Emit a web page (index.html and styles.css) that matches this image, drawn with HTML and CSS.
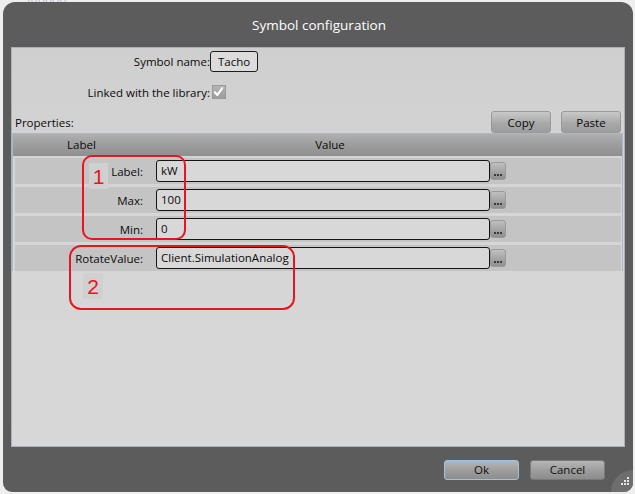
FILE: index.html
```html
<!DOCTYPE html>
<html>
<head>
<meta charset="utf-8">
<link rel="stylesheet" href="styles.css">
</head>
<body>
<div class="backdrop">Ribbon</div>
<div class="window">
  <div class="titlebar">Symbol configuration</div>
  <div class="panel">
    <div class="form-row first">
      <div class="form-label">Symbol name:</div>
      <div class="namebox">Tacho</div>
    </div>
    <div class="form-row second">
      <div class="form-label">Linked with the library:</div>
      <div class="checkbox">
        <svg width="14" height="14" viewBox="0 0 14 14"><path d="M3 7.2 L5.8 10.2 L11 2.8" fill="none" stroke="#fff" stroke-width="2.2" stroke-linejoin="round" stroke-linecap="round"/></svg>
      </div>
    </div>
    <div class="props-row">
      <div class="props-label">Properties:</div>
      <div class="props-actions">
        <div class="btn">Copy</div>
        <div class="btn">Paste</div>
      </div>
    </div>
    <div class="grid">
      <div class="grid-head">
        <div class="head-label">Label</div>
        <div class="head-value">Value</div>
      </div>
      <div class="grid-row">
        <div class="cell-label">Label:</div>
        <div class="textbox">kW</div>
        <div class="ellipsis"><i></i><i></i><i></i></div>
      </div>
      <div class="grid-row">
        <div class="cell-label">Max:</div>
        <div class="textbox">100</div>
        <div class="ellipsis"><i></i><i></i><i></i></div>
      </div>
      <div class="grid-row">
        <div class="cell-label">Min:</div>
        <div class="textbox">0</div>
        <div class="ellipsis"><i></i><i></i><i></i></div>
      </div>
      <div class="grid-row">
        <div class="cell-label">RotateValue:</div>
        <div class="textbox">Client.SimulationAnalog</div>
        <div class="ellipsis"><i></i><i></i><i></i></div>
      </div>
    </div>
    <div class="annot annot-1"></div>
    <div class="annot-num num-1">1</div>
    <div class="annot annot-2"></div>
    <div class="annot-num num-2">2</div>
  </div>
  <div class="footer">
    <div class="dbtn focused">Ok</div>
    <div class="dbtn">Cancel</div>
    <div class="grip">
      <svg width="20" height="20" viewBox="0 0 20 20">
        <rect x="14" y="5" width="2" height="2" fill="#e6e6e6"/>
        <rect x="11" y="8" width="2" height="2" fill="#e6e6e6"/>
        <rect x="14" y="8" width="2" height="2" fill="#e6e6e6"/>
        <rect x="8" y="11" width="2" height="2" fill="#e6e6e6"/>
        <rect x="11" y="11" width="2" height="2" fill="#e6e6e6"/>
        <rect x="14" y="11" width="2" height="2" fill="#e6e6e6"/>
      </svg>
    </div>
  </div>
</div>
</body>
</html>
```
FILE: styles.css
```css
* { box-sizing: border-box; }
html, body { margin: 0; padding: 0; }
body {
  width: 635px;
  height: 494px;
  overflow: hidden;
  background: #eeeeee;
  font-family: "Open Sans", "Noto Sans", sans-serif;
  font-size: 11.5px;
  color: #0a0a0a;
  position: relative;
}
.backdrop {
  position: absolute;
  left: 27px;
  top: -9px;
  color: #b9c0cc;
  font-size: 12px;
}
.window {
  position: relative;
  margin: 2px 0 0 3px;
  width: 630px;
  height: 490px;
  background: #5c5c5c;
  border-radius: 12px 12px 9px 9px;
  display: flex;
  flex-direction: column;
}
.titlebar {
  height: 45px;
  line-height: 46px;
  text-align: center;
  color: #ffffff;
  font-size: 13.5px;
  padding-left: 2px;
}
.panel {
  position: relative;
  margin-left: 8px;
  width: 614px;
  height: 400px;
  border: 1px solid #a7b1bd;
  background: linear-gradient(#cfcfcf, #d6d6d6 40%, #d7d7d7);
  padding-top: 2px;
}
.form-row {
  display: flex;
  align-items: center;
  height: 22px;
}
.form-row.second { margin-top: 9px; }
.form-label {
  width: 198px;
  text-align: right;
}
.namebox {
  height: 21px;
  line-height: 19px;
  padding: 0 7px;
  border: 1px solid #1e1e1e;
  border-radius: 3px;
  background: #dcdcdc;
}
.checkbox {
  margin-left: 2px;
  width: 14px;
  height: 14px;
  background: linear-gradient(#b4b4b4, #9c9c9c);
  border: 1px solid #9a9a9a;
  display: flex;
}
.checkbox svg { margin: -1px 0 0 -1px; }
.props-row {
  display: flex;
  align-items: center;
  justify-content: space-between;
  height: 22px;
  margin-top: 8px;
  padding-left: 3px;
}
.props-actions {
  display: flex;
  gap: 10px;
  padding-right: 3px;
}
.btn {
  width: 60px;
  height: 22px;
  line-height: 21px;
  text-align: center;
  border: 1px solid #9a9a9a;
  border-radius: 3px;
  background: linear-gradient(#c9c9c9, #a9a9a9 55%, #9d9d9d);
}
.grid {
  margin-right: 1px;
  border: 1px solid #aab8c8;
  border-bottom: none;
}
.grid-head {
  display: flex;
  height: 22px;
  line-height: 21px;
  background: linear-gradient(#b0b0b0, #a0a0a0 40%, #8f8f8f);
}
.head-label {
  width: 135px;
  text-align: center;
  padding-left: 2px;
}
.head-value {
  width: 364px;
  text-align: center;
}
.grid-row {
  display: flex;
  align-items: center;
  height: 26px;
  margin: 3px 1px 0 2px;
  background: #c4c4c4;
}
.grid-head + .grid-row { margin-top: 2px; }
.cell-label {
  width: 133px;
  text-align: right;
  padding-right: 5px;
}
.textbox {
  margin-left: 8px;
  width: 334px;
  height: 22px;
  line-height: 20px;
  padding-left: 4px;
  border: 1px solid #141414;
  border-radius: 3px;
  background: #d8d8d8;
}
.ellipsis {
  width: 16px;
  height: 18px;
  border: 1px solid #9a9a9a;
  border-radius: 3px;
  background: linear-gradient(#c0c0c0, #a4a4a4 55%, #8f8f8f);
  display: flex;
  justify-content: center;
  align-items: flex-end;
  gap: 1px;
  padding-bottom: 3px;
}
.ellipsis i {
  display: block;
  width: 2px;
  height: 2px;
  background: #3a3a3a;
}
.annot {
  position: absolute;
  border: 2px solid #e8141e;
}
.annot-1 {
  left: 70px;
  top: 107px;
  width: 104px;
  height: 85px;
  border-radius: 10px;
}
.annot-2 {
  left: 57px;
  top: 197px;
  width: 226px;
  height: 65px;
  border-radius: 12px;
}
.annot-num {
  position: absolute;
  background: #d0d0d0;
  color: #e8141e;
  font-family: "Liberation Sans", Arial, sans-serif;
  font-size: 21px;
  text-align: center;
}
.num-1 {
  left: 77px;
  top: 115px;
  width: 19px;
  height: 26px;
  line-height: 28px;
}
.num-2 {
  left: 71px;
  top: 225px;
  width: 20px;
  height: 26px;
  line-height: 28px;
}
.footer {
  position: relative;
  flex: 1;
  display: flex;
  justify-content: flex-end;
  align-items: flex-start;
  padding: 13px 28px 0 0;
  gap: 11px;
}
.dbtn {
  width: 75px;
  height: 20px;
  line-height: 18px;
  text-align: center;
  border: 1px solid #7a7a7a;
  border-radius: 3px;
  background: linear-gradient(#b6b6b6, #9c9c9c 55%, #8d8d8d);
  color: #111;
}
.dbtn.focused { border-color: #9fc2de; }
.grip {
  position: absolute;
  right: 0;
  bottom: 0;
  width: 22px;
  height: 22px;
  border-radius: 22px 0 9px 0;
  background: #6e6e6e;
  display: flex;
  align-items: flex-end;
  justify-content: flex-end;
}
```
